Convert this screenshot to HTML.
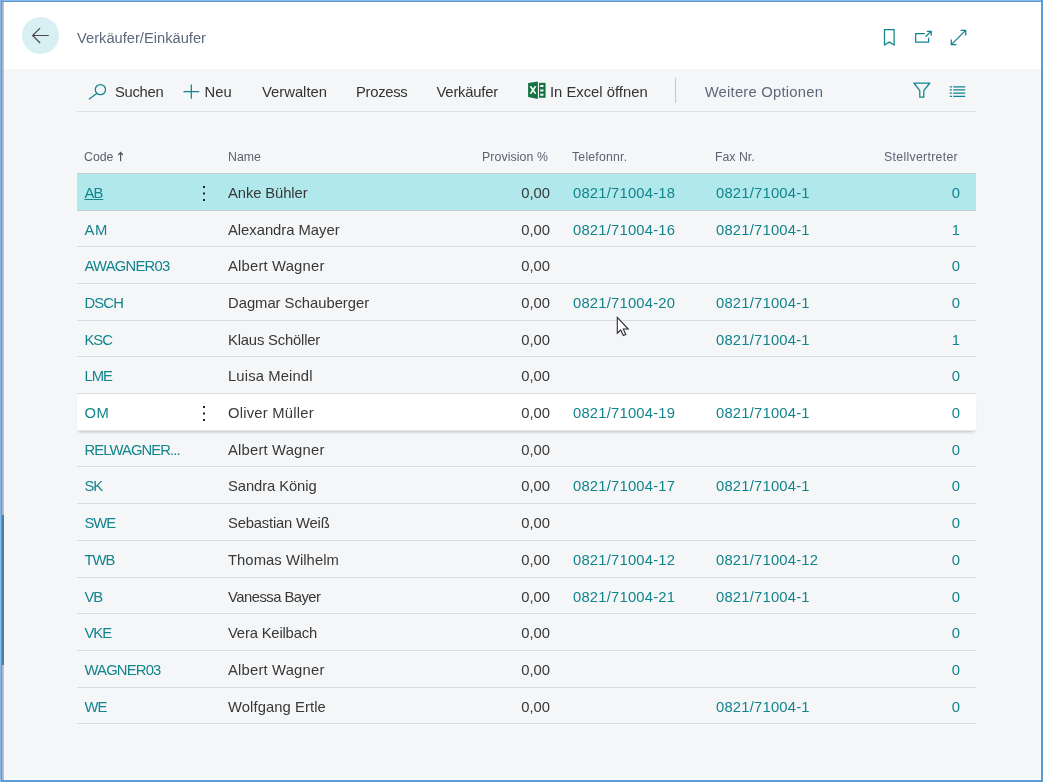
<!DOCTYPE html>
<html lang="de">
<head>
<meta charset="utf-8">
<title>Verkäufer/Einkäufer</title>
<style>
html,body{margin:0;padding:0;}
body{width:1043px;height:782px;overflow:hidden;position:relative;background:#f5f6f8;font-family:"Liberation Sans",sans-serif;font-size:14.8px;color:#383838;}
.abs{position:absolute;}
#hdr{left:0;top:0;width:1043px;height:69px;background:#fff;}
#frame-t{left:0;top:0;width:1043px;height:2px;background:#5b9bd5;}
#frame-t2{left:0;top:0;width:1043px;height:1px;background:#8ab8e6;}
#frame-b{left:0;top:780px;width:1043px;height:2px;background:#5b9bd5;}
#frame-bw{left:4px;top:779px;width:1037px;height:1px;background:#fdfdfd;}
#frame-l{left:0;top:0;width:2px;height:782px;background:#5b9bd5;}
#frame-l0{left:0;top:0;width:1px;height:782px;background:#8ab8e6;}
#frame-lg{left:2px;top:2px;width:2px;height:778px;background:linear-gradient(90deg,#9fb4cc,#c4c6c9);}
#frame-lt{left:2px;top:515px;width:2px;height:150px;background:#3d84ad;}
#frame-r{left:1041px;top:0;width:2px;height:782px;background:#5b9bd5;}
#back{left:22.2px;top:17.2px;width:36.6px;height:36.6px;border-radius:50%;background:#d8f0f3;}
#title{left:77px;top:28px;font-size:14.7px;color:#5c687c;line-height:20px;white-space:nowrap;}
.tb{top:82px;line-height:20px;white-space:nowrap;color:#333;font-size:14.8px;}
#tbline{left:77px;top:111px;width:899px;height:1px;background:#dcdfe3;}
#tbsep{left:675px;top:78px;width:1px;height:25px;background:#c4c8cc;}
.hd{top:148px;font-size:12.3px;color:#5c6370;line-height:18px;white-space:nowrap;}
.row{left:77px;width:899px;height:36px;border-bottom:1px solid #d8dbdf;}
.row.sel{background:#b0e8ec;border-bottom-color:#c6ccd2;}
.row.hov{background:#fff;box-shadow:0 3px 3px -2px rgba(0,0,0,.22);border-bottom-color:#e4e6e8;z-index:2;}
.c{position:absolute;top:1px;line-height:37px;white-space:nowrap;}
.t{color:#12848c;}
.c1{left:7.5px;}
.c2{left:151px;}
.c3{right:426px;}
.c4{left:496px;letter-spacing:0.2px;}
.c5{left:639px;letter-spacing:0.2px;}
.c6{right:16px;}
.dots{position:absolute;left:125.6px;top:11.6px;width:2px;height:2px;background:#222;box-shadow:0 6.5px 0 #222,0 13px 0 #222;}
</style>
</head>
<body>
<div id="hdr" class="abs"></div>
<div id="fg" style="position:absolute;left:0;top:0;width:1043px;height:782px;will-change:transform">
<div id="back" class="abs"></div>
<svg class="abs" style="left:0;top:0" width="1043" height="120" viewBox="0 0 1043 120" fill="none">
<path d="M48.8 35.5H32.6M40.1 28.1L32.6 35.5L40.1 43" stroke="#484848" stroke-width="1.15"/>
<g stroke="#0f848c" stroke-width="1.25">
<path d="M884.5 29.5H894.1V45L889.3 42.1L884.5 45Z"/>
<path d="M924.9 33.7H915.7V42H928.6V37.8"/>
<path d="M925.6 36.7L931 31.4M926.8 31.3H931.2V35.8"/>
<path d="M951.4 44.6L965.6 30.4M960.6 30.3H965.7V35.6M951.3 39.6V44.7H956.5"/>
<circle cx="100.4" cy="89.6" r="5.1"/>
<path d="M96.7 93.4L88.9 99.3"/>
<path d="M183.5 91.6H199.2M191.3 84.4V98.8"/>
<path d="M913.9 83H929.8L923.8 90.6V97.2H919.8V90.6Z" stroke-linejoin="round"/>
<path d="M949.8 86.8H951.9M953.2 86.8H965.2M949.8 89.9H951.9M953.2 89.9H965.2M949.8 93.2H951.9M953.2 93.2H965.2M949.8 96.4H951.9M953.2 96.4H965.2"/>
</g>
<g>
<path d="M528.1 83L537.9 81.4V98.9L528.1 97.1Z" fill="#157242" stroke="#fbfcfc" stroke-width="0.8" paint-order="stroke"/>
<rect x="539" y="82.8" width="6.6" height="15" fill="#157242" stroke="#fbfcfc" stroke-width="0.8" paint-order="stroke"/>
<path d="M530.4 86.3L535.6 93.8M535.6 86.3L530.4 93.8" stroke="#f2f8f4" stroke-width="1.7"/>
<path d="M540.2 85H543.5V86.9H540.2ZM540.2 89.4H543.5V91.4H540.2ZM540.2 93.7H543.5V95.7H540.2Z" fill="#f2f8f4"/>
</g>
</svg>
<div id="title" class="abs">Verkäufer/Einkäufer</div>

<div class="abs tb" style="left:115px;letter-spacing:-0.3px">Suchen</div>
<div class="abs tb" style="left:204.5px">Neu</div>
<div class="abs tb" style="left:262px">Verwalten</div>
<div class="abs tb" style="left:356px;letter-spacing:-0.3px">Prozess</div>
<div class="abs tb" style="left:436.5px;letter-spacing:-0.2px">Verkäufer</div>
<div class="abs tb" style="left:550px">In Excel öffnen</div>
<div class="abs tb" style="left:704.7px;color:#5c687c;letter-spacing:0.22px">Weitere Optionen</div>
<div id="tbsep" class="abs"></div>
<div id="tbline" class="abs"></div>

<div class="abs hd" style="left:84px">Code</div>
<svg class="abs" style="left:116px;top:149px" width="10" height="15" viewBox="116 149 10 15" fill="none"><path d="M120.6 161.2V152.4M118.3 155L120.6 152.4L122.9 155" stroke="#4f5664" stroke-width="1.2"/></svg>
<div class="abs hd" style="left:228px">Name</div>
<div class="abs hd" style="right:495px;letter-spacing:0.1px">Provision %</div>
<div class="abs hd" style="left:572px;letter-spacing:0.2px">Telefonnr.</div>
<div class="abs hd" style="left:715px">Fax Nr.</div>
<div class="abs hd" style="right:85px;letter-spacing:0.3px">Stellvertreter</div>

<div id="rows">
<div class="row abs sel" style="top:173px;height:36px;border-top:1px solid #c6ccd2"><span class="c c1 t"><u><span style="letter-spacing:-1.00px">A</span>B</u></span><span class="dots"></span><span class="c c2" style="letter-spacing:-0.10px">Anke Bühler</span><span class="c c3">0,00</span><span class="c c4 t">0821/71004-18</span><span class="c c5 t">0821/71004-1</span><span class="c c6 t">0</span></div>
<div class="row abs" style="top:211px;height:35px"><span class="c c1 t" style="letter-spacing:0.60px">AM</span><span class="c c2" style="letter-spacing:-0.02px">Alexandra Mayer</span><span class="c c3">0,00</span><span class="c c4 t">0821/71004-16</span><span class="c c5 t">0821/71004-1</span><span class="c c6 t">1</span></div>
<div class="row abs" style="top:247px;height:36px"><span class="c c1 t" style="letter-spacing:-0.76px">AWAGNER03</span><span class="c c2" style="letter-spacing:0.19px">Albert Wagner</span><span class="c c3">0,00</span><span class="c c6 t">0</span></div>
<div class="row abs" style="top:284px;height:36px"><span class="c c1 t" style="letter-spacing:-0.87px">DSCH</span><span class="c c2" style="letter-spacing:-0.02px">Dagmar Schauberger</span><span class="c c3">0,00</span><span class="c c4 t">0821/71004-20</span><span class="c c5 t">0821/71004-1</span><span class="c c6 t">0</span></div>
<div class="row abs" style="top:321px;height:35px"><span class="c c1 t" style="letter-spacing:-1.00px">KSC</span><span class="c c2" style="letter-spacing:-0.18px">Klaus Schöller</span><span class="c c3">0,00</span><span class="c c5 t">0821/71004-1</span><span class="c c6 t">1</span></div>
<div class="row abs" style="top:357px;height:36px"><span class="c c1 t" style="letter-spacing:-1.00px">LME</span><span class="c c2" style="letter-spacing:0.13px">Luisa Meindl</span><span class="c c3">0,00</span><span class="c c6 t">0</span></div>
<div class="row abs hov" style="top:394px;height:36px"><span class="c c1 t" style="letter-spacing:0.60px">OM</span><span class="dots"></span><span class="c c2" style="letter-spacing:0.22px">Oliver Müller</span><span class="c c3">0,00</span><span class="c c4 t">0821/71004-19</span><span class="c c5 t">0821/71004-1</span><span class="c c6 t">0</span></div>
<div class="row abs" style="top:431px;height:35px"><span class="c c1 t" style="letter-spacing:-0.90px">RELWAGNER...</span><span class="c c2" style="letter-spacing:0.19px">Albert Wagner</span><span class="c c3">0,00</span><span class="c c6 t">0</span></div>
<div class="row abs" style="top:467px;height:36px"><span class="c c1 t" style="letter-spacing:-1.00px">SK</span><span class="c c2" style="letter-spacing:-0.09px">Sandra König</span><span class="c c3">0,00</span><span class="c c4 t">0821/71004-17</span><span class="c c5 t">0821/71004-1</span><span class="c c6 t">0</span></div>
<div class="row abs" style="top:504px;height:36px"><span class="c c1 t" style="letter-spacing:-1.00px">SWE</span><span class="c c2" style="letter-spacing:-0.19px">Sebastian Weiß</span><span class="c c3">0,00</span><span class="c c6 t">0</span></div>
<div class="row abs" style="top:541px;height:36px"><span class="c c1 t" style="letter-spacing:-1.00px">TWB</span><span class="c c2" style="letter-spacing:0.05px">Thomas Wilhelm</span><span class="c c3">0,00</span><span class="c c4 t">0821/71004-12</span><span class="c c5 t">0821/71004-12</span><span class="c c6 t">0</span></div>
<div class="row abs" style="top:578px;height:35px"><span class="c c1 t" style="letter-spacing:-1.00px">VB</span><span class="c c2" style="letter-spacing:-0.52px">Vanessa Bayer</span><span class="c c3">0,00</span><span class="c c4 t">0821/71004-21</span><span class="c c5 t">0821/71004-1</span><span class="c c6 t">0</span></div>
<div class="row abs" style="top:614px;height:36px"><span class="c c1 t" style="letter-spacing:-1.00px">VKE</span><span class="c c2" style="letter-spacing:-0.18px">Vera Keilbach</span><span class="c c3">0,00</span><span class="c c6 t">0</span></div>
<div class="row abs" style="top:651px;height:36px"><span class="c c1 t" style="letter-spacing:-0.81px">WAGNER03</span><span class="c c2" style="letter-spacing:0.19px">Albert Wagner</span><span class="c c3">0,00</span><span class="c c6 t">0</span></div>
<div class="row abs" style="top:688px;height:35px"><span class="c c1 t" style="letter-spacing:-1.00px">WE</span><span class="c c2" style="letter-spacing:0.08px">Wolfgang Ertle</span><span class="c c3">0,00</span><span class="c c5 t">0821/71004-1</span><span class="c c6 t">0</span></div>
</div><!--endrows-->

<svg class="abs" style="left:612px;top:313px" width="22" height="28" viewBox="612 313 22 28"><path d="M617.3 317.4V333.2L620.7 330L623.4 335.6L625.8 334.5L623.3 329H628.2Z" fill="#fff" stroke="#2c2c36" stroke-width="1.1" stroke-linejoin="miter"/></svg>
</div><!--endfg-->
<div id="frame-lg" class="abs"></div>
<div id="frame-lt" class="abs"></div>
<div id="frame-bw" class="abs"></div>
<div id="frame-t" class="abs"></div>
<div id="frame-t2" class="abs"></div>
<div id="frame-b" class="abs"></div>
<div id="frame-l" class="abs"></div>
<div id="frame-l0" class="abs"></div>
<div id="frame-r" class="abs"></div>
</body>
</html>
